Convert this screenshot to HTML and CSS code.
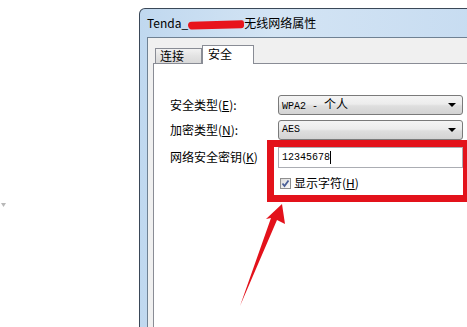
FILE: index.html
```html
<!DOCTYPE html>
<html lang="zh-CN">
<head>
  <meta charset="UTF-8">
  <meta name="viewport" content="width=device-width, initial-scale=1.0">
  <title>无线网络属性</title>
  <link rel="stylesheet" href="styles.css">
</head>
<body>
  <span class="stray-mark"></span>

  <div class="window">
    <div class="titlebar">
      <span class="title">Tenda_<span class="scribble"></span>无线网络属性</span>
    </div>

    <div class="client">
      <div class="tabs">
        <div class="tab">连接</div>
        <div class="tab active">安全</div>
      </div>

      <div class="tab-page">
        <div class="row row-type">
          <label class="label">安全类型(<u>E</u>):</label>
          <div class="combo"><span class="value"><span class="mono">WPA2 - </span>个人</span><span class="arrow"></span></div>
        </div>
        <div class="row row-enc">
          <label class="label">加密类型(<u>N</u>):</label>
          <div class="combo"><span class="value mono">AES</span><span class="arrow"></span></div>
        </div>
        <div class="row row-key">
          <label class="label">网络安全密钥(<u>K</u>)</label>
          <div class="textbox"><span class="mono">12345678</span><span class="caret"></span></div>
        </div>
        <div class="row row-show">
          <span class="label"></span>
          <label class="check">
            <span class="checkbox">
              <svg width="9" height="9" viewBox="0 0 9 9"><path d="M1.5 4.5 L3.5 7 L7.5 1.5" fill="none" stroke="#4a5f97" stroke-width="1.8"/></svg>
            </span>
            <span>显示字符(<u>H</u>)</span>
          </label>
        </div>
      </div>
    </div>
  </div>

  <!-- red annotation -->
  <div class="highlight"></div>
  <svg class="pointer" width="467" height="327" viewBox="0 0 467 327">
    <polygon points="282,204 285,224 277,220 240,306 271,218 266,219" fill="#e3121b"/>
  </svg>
</body>
</html>
```

FILE: styles.css
```css
body {
  margin: 0;
  width: 467px;
  height: 327px;
  overflow: hidden;
  position: relative;
  background: #fff;
  font-family: "Noto Sans CJK SC", "DejaVu Sans", sans-serif;
  font-size: 12px;
  color: #000;
}

.stray-mark {
  position: absolute;
  left: 1px;
  top: 203px;
  width: 5px;
  height: 4px;
  background: #b8b8b8;
  clip-path: polygon(0 0, 100% 0, 50% 100%);
}

.window {
  margin: 8px 0 0 139px;
  width: 340px;
  height: 319px;
  border: 1px solid #3a4858;
  border-bottom: none;
  border-radius: 6px 6px 0 0;
  background: linear-gradient(90deg, #c0d8ef, #d3e4f4 40%, #c7dcf1);
  box-sizing: border-box;
  display: flex;
  flex-direction: column;
}

.titlebar {
  height: 28px;
  flex: none;
  display: flex;
  align-items: center;
  padding-left: 7px;
}

.title {
  display: flex;
  align-items: center;
  font-size: 12px;
  line-height: 1;
}

.scribble {
  display: inline-block;
  width: 56px;
  height: 8px;
  margin-top: 3px;
  background: #e8141c;
  border-radius: 5px 3px 4px 6px;
  transform: rotate(-1.5deg);
}

.client {
  flex: 1;
  margin-left: 7px;
  border-top: 1px solid #6f8193;
  border-left: 1px solid #6f8193;
  background: #f0f0f0;
  padding: 6px 0 0 5px;
  display: flex;
  flex-direction: column;
}

.tabs {
  display: flex;
  align-items: flex-end;
  height: 19px;
  flex: none;
  padding-left: 2px;
}

.tab {
  height: 14px;
  width: 41px;
  border: 1px solid #898c95;
  border-bottom: none;
  background: linear-gradient(#f2f2f2, #e3e3e3 50%, #d9d9d9);
  display: flex;
  align-items: center;
  padding-left: 4px;
  line-height: 1;
}

.tab.active {
  height: 19px;
  width: 52px;
  box-sizing: border-box;
  margin-bottom: -1px;
  padding: 2px 0 0 5px;
  align-items: flex-start;
  background: #fff;
  position: relative;
  z-index: 1;
}

.tab-page {
  flex: 1;
  border: 1px solid #898c95;
  border-right: none;
  border-bottom: none;
  background: #fff;
  padding: 31px 0 0 16px;
}

.row {
  display: flex;
  align-items: center;
  height: 20px;
}

.row-type { margin-bottom: 5px; }
.row-enc { margin-bottom: 7px; }
.row-key { margin-bottom: 9px; }
.row-show { height: 14px; }

.label {
  width: 108px;
  flex: none;
  line-height: 1;
}

.mono {
  font-family: "Liberation Mono", monospace;
  font-size: 10px;
  white-space: pre;
}

.combo {
  position: relative;
  width: 185px;
  height: 20px;
  box-sizing: border-box;
  border: 1px solid #7a7a7a;
  border-radius: 3px;
  background: linear-gradient(#f4f4f4, #ececec 45%, #dedede 55%, #d3d3d3);
  display: flex;
  align-items: center;
  padding-left: 3px;
  line-height: 1;
}

.arrow {
  position: absolute;
  right: 6px;
  top: 7px;
  width: 0;
  height: 0;
  border-left: 4px solid transparent;
  border-right: 4px solid transparent;
  border-top: 4px solid #000;
}

.textbox {
  width: 185px;
  height: 21px;
  box-sizing: border-box;
  border: 1px solid #abadb3;
  background: #fff;
  display: flex;
  align-items: center;
  padding-left: 3px;
}

.caret {
  width: 1px;
  height: 13px;
  background: #000;
}

.check {
  display: flex;
  align-items: center;
  gap: 3px;
  margin-left: 2px;
  line-height: 1;
}

.checkbox {
  width: 11px;
  height: 11px;
  box-sizing: border-box;
  border: 1px solid #8f8f8f;
  background: linear-gradient(135deg, #dcdcdc, #fbfbfb);
  display: flex;
  align-items: center;
  justify-content: center;
}

.highlight {
  position: absolute;
  left: 267px;
  top: 140px;
  width: 210px;
  height: 62px;
  box-sizing: border-box;
  border: 7px solid #e3121b;
  border-right-width: 14px;
}

.pointer {
  position: absolute;
  left: 0;
  top: 0;
}
```
